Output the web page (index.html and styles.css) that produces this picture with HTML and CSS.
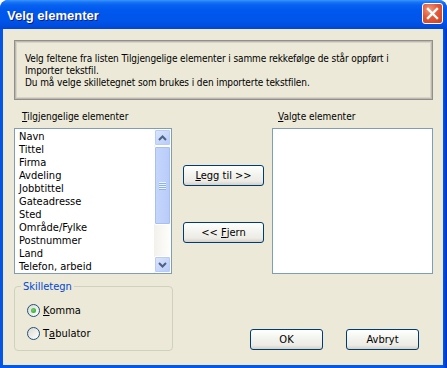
FILE: index.html
```html
<html lang="no">
    <head>
        <meta charset="UTF-8">
        <title>Velg elementer</title>
        <link rel="stylesheet" href="styles.css">
    </head>
    <body>
        <div class="window">
            <div class="titlebar">
                <span class="title">Velg elementer</span>
                <button class="close" type="button">
                    <svg width="13" height="13" viewBox="0 0 13 13">
                        <path d="M2 2 L11 11 M11 2 L2 11" stroke="#fff" stroke-width="2.4" stroke-linecap="square"/>
                    </svg>
                </button>
            </div>
            <div class="client">
                <div class="info">
                    Velg feltene fra listen Tilgjengelige elementer i samme rekkefølge de står oppført i<br>
                    Importer tekstfil.<br>
                    Du må velge skilletegnet som brukes i den importerte tekstfilen.
                </div>

                <div class="lists">
                    <label class="caption left"><u>T</u>ilgjengelige elementer</label>
                    <span></span>
                    <label class="caption right"><u>V</u>algte elementer</label>

                    <div class="listbox">
                        <ul class="items">
                            <li>Navn</li>
                            <li>Tittel</li>
                            <li>Firma</li>
                            <li>Avdeling</li>
                            <li>Jobbtittel</li>
                            <li>Gateadresse</li>
                            <li>Sted</li>
                            <li>Område/Fylke</li>
                            <li>Postnummer</li>
                            <li>Land</li>
                            <li>Telefon, arbeid</li>
                        </ul>
                        <div class="scrollbar">
                            <div class="sb-btn">
                                <svg width="9" height="6" viewBox="0 0 9 6"><polyline points="1,5 4.5,1.5 8,5" fill="none" stroke="#4D6185" stroke-width="2"/></svg>
                            </div>
                            <div class="sb-thumb">
                                <span></span><span></span><span></span><span></span>
                            </div>
                            <div class="sb-track"></div>
                            <div class="sb-btn">
                                <svg width="9" height="6" viewBox="0 0 9 6"><polyline points="1,1 4.5,4.5 8,1" fill="none" stroke="#4D6185" stroke-width="2"/></svg>
                            </div>
                        </div>
                    </div>

                    <div class="movers">
                        <button class="xp-btn" type="button"><u>L</u>egg til &gt;&gt;</button>
                        <button class="xp-btn" type="button">&lt;&lt; <u>F</u>jern</button>
                    </div>

                    <div class="listbox empty"></div>
                </div>

                <div class="bottom">
                    <fieldset class="group">
                        <legend>Skilletegn</legend>
                        <label class="radio"><span class="dot checked"></span><u>K</u>omma</label>
                        <label class="radio"><span class="dot"></span>T<u>a</u>bulator</label>
                    </fieldset>
                    <div class="actions">
                        <button class="xp-btn" type="button">OK</button>
                        <button class="xp-btn" type="button">Avbryt</button>
                    </div>
                </div>
            </div>
        </div>
    </body>
</html>
```

FILE: styles.css
```css
* {
    margin: 0;
    padding: 0;
    box-sizing: border-box;
}

body {
    background-color: #fff;
    font-family: "DejaVu Sans Condensed", "DejaVu Sans", sans-serif;
    font-size: 10px;
    color: #000;
}

u {
    text-decoration: underline;
    text-underline-offset: 1px;
}

.window {
    width: 447px;
    height: 368px;
    display: flex;
    flex-direction: column;
    background: linear-gradient(90deg, #0A52E0 0, #0058EE 3px, #0058EE 443px, #0031C0 447px);
    border-radius: 8px 8px 0 0;
    overflow: hidden;
}

.titlebar {
    height: 29px;
    flex: none;
    display: flex;
    align-items: center;
    justify-content: space-between;
    padding: 0 4px 0 7px;
    background: linear-gradient(#3D95FF 0, #1A76F8 2px, #0862F0 5px, #0058EE 10px, #0055EA 20px, #004CE0 26px, #0045D8 29px);
    border-radius: 8px 8px 0 0;
}

.title {
    font-family: "Liberation Sans", sans-serif;
    font-weight: bold;
    font-size: 13px;
    color: #fff;
    text-shadow: 1px 1px 0 #0A1E8C;
    margin-top: 1px;
}

.close {
    width: 21px;
    height: 21px;
    margin-top: -3px;
    border: 1px solid #fff;
    border-radius: 3px;
    background: radial-gradient(circle at 35% 30%, #F09A7A 0, #E2583A 45%, #C8401E 100%);
    display: flex;
    align-items: center;
    justify-content: center;
}

.client {
    flex: 1;
    margin: 0 4px 3px 3px;
    background-color: #ECE9D8;
    padding: 11px 0 0 11px;
}

.info {
    width: 419px;
    height: 60px;
    border: 1px solid #8E8F8F;
    box-shadow: inset 0 0 0 1px #BDBAAD, inset 0 0 0 2px #D8D5C6;
    padding: 12px 0 0 10px;
    line-height: 12px;
    letter-spacing: -0.1px;
}

.lists {
    margin-top: 10px;
    display: grid;
    grid-template-columns: 158px 81px 158px;
    grid-template-rows: 13px 146px;
    column-gap: 11px;
    row-gap: 5px;
}

.lists > :nth-child(6) {
    margin-left: -3px;
}

.caption {
    line-height: 13px;
}

.caption.left {
    padding-left: 8px;
}

.caption.right {
    padding-left: 3px;
}

.listbox {
    border: 1px solid #7F9DB9;
    background-color: #fff;
    display: flex;
}

.items {
    flex: 1;
    list-style: none;
    padding: 1px 0 0 4px;
    line-height: 13px;
    font-size: 11px;
    overflow: hidden;
}

.scrollbar {
    width: 17px;
    display: flex;
    flex-direction: column;
    background: linear-gradient(90deg, #F3F1EC, #FEFEFB);
}

.sb-btn {
    height: 17px;
    flex: none;
    border: 1px solid #fff;
    border-radius: 2px;
    background: linear-gradient(135deg, #DCE7FD, #B6CAF8);
    box-shadow: inset 0 0 0 1px #B8CCF6;
    display: flex;
    align-items: center;
    justify-content: center;
}

.sb-thumb {
    height: 79px;
    flex: none;
    border: 1px solid #fff;
    border-radius: 2px;
    background: linear-gradient(90deg, #C6D6FC, #B8CBF9);
    box-shadow: inset 0 0 0 1px #A9BFF2;
    display: flex;
    flex-direction: column;
    align-items: center;
    justify-content: center;
    gap: 1px;
}

.sb-thumb span {
    width: 7px;
    height: 1px;
    background-color: #EEF4FE;
    box-shadow: 0 1px 0 #8CB0F8;
}

.sb-track {
    flex: 1;
}

.movers {
    display: flex;
    flex-direction: column;
    gap: 36px;
    padding-top: 37px;
}

.xp-btn {
    height: 21px;
    font-family: inherit;
    font-size: 11px;
    border: 1px solid #003C74;
    border-radius: 3px;
    background: linear-gradient(#FFFFFF 0, #F4F4F0 40%, #ECEBE6 80%, #D6D0C5 100%);
    color: #000;
}

.bottom {
    margin-top: 6px;
    display: flex;
    align-items: flex-end;
}

.group {
    width: 159px;
    height: 71px;
    border: 1px solid #D0D0BF;
    border-radius: 4px;
    padding: 11px 0 0 12px;
}

.group legend {
    color: #0046D5;
    font-size: 11px;
    line-height: 13px;
    padding: 0 2px;
    margin-left: -6px;
}

.radio {
    display: flex;
    align-items: center;
    height: 13px;
    font-size: 11px;
    margin-bottom: 10px;
}

.radio:last-child {
    margin-bottom: 0;
}

.dot {
    width: 13px;
    height: 13px;
    border: 1px solid #1C5180;
    border-radius: 50%;
    background: linear-gradient(135deg, #DCD9CF, #FFFFFF);
    margin-right: 3px;
    display: flex;
    align-items: center;
    justify-content: center;
}

.dot.checked::after {
    content: "";
    width: 5px;
    height: 5px;
    border-radius: 50%;
    background: radial-gradient(circle at 40% 40%, #6ED36E, #21A121);
}

.actions {
    margin-left: auto;
    margin-right: 24px;
    margin-bottom: 1px;
    display: flex;
    gap: 23px;
}

.actions .xp-btn {
    width: 73px;
}
```
